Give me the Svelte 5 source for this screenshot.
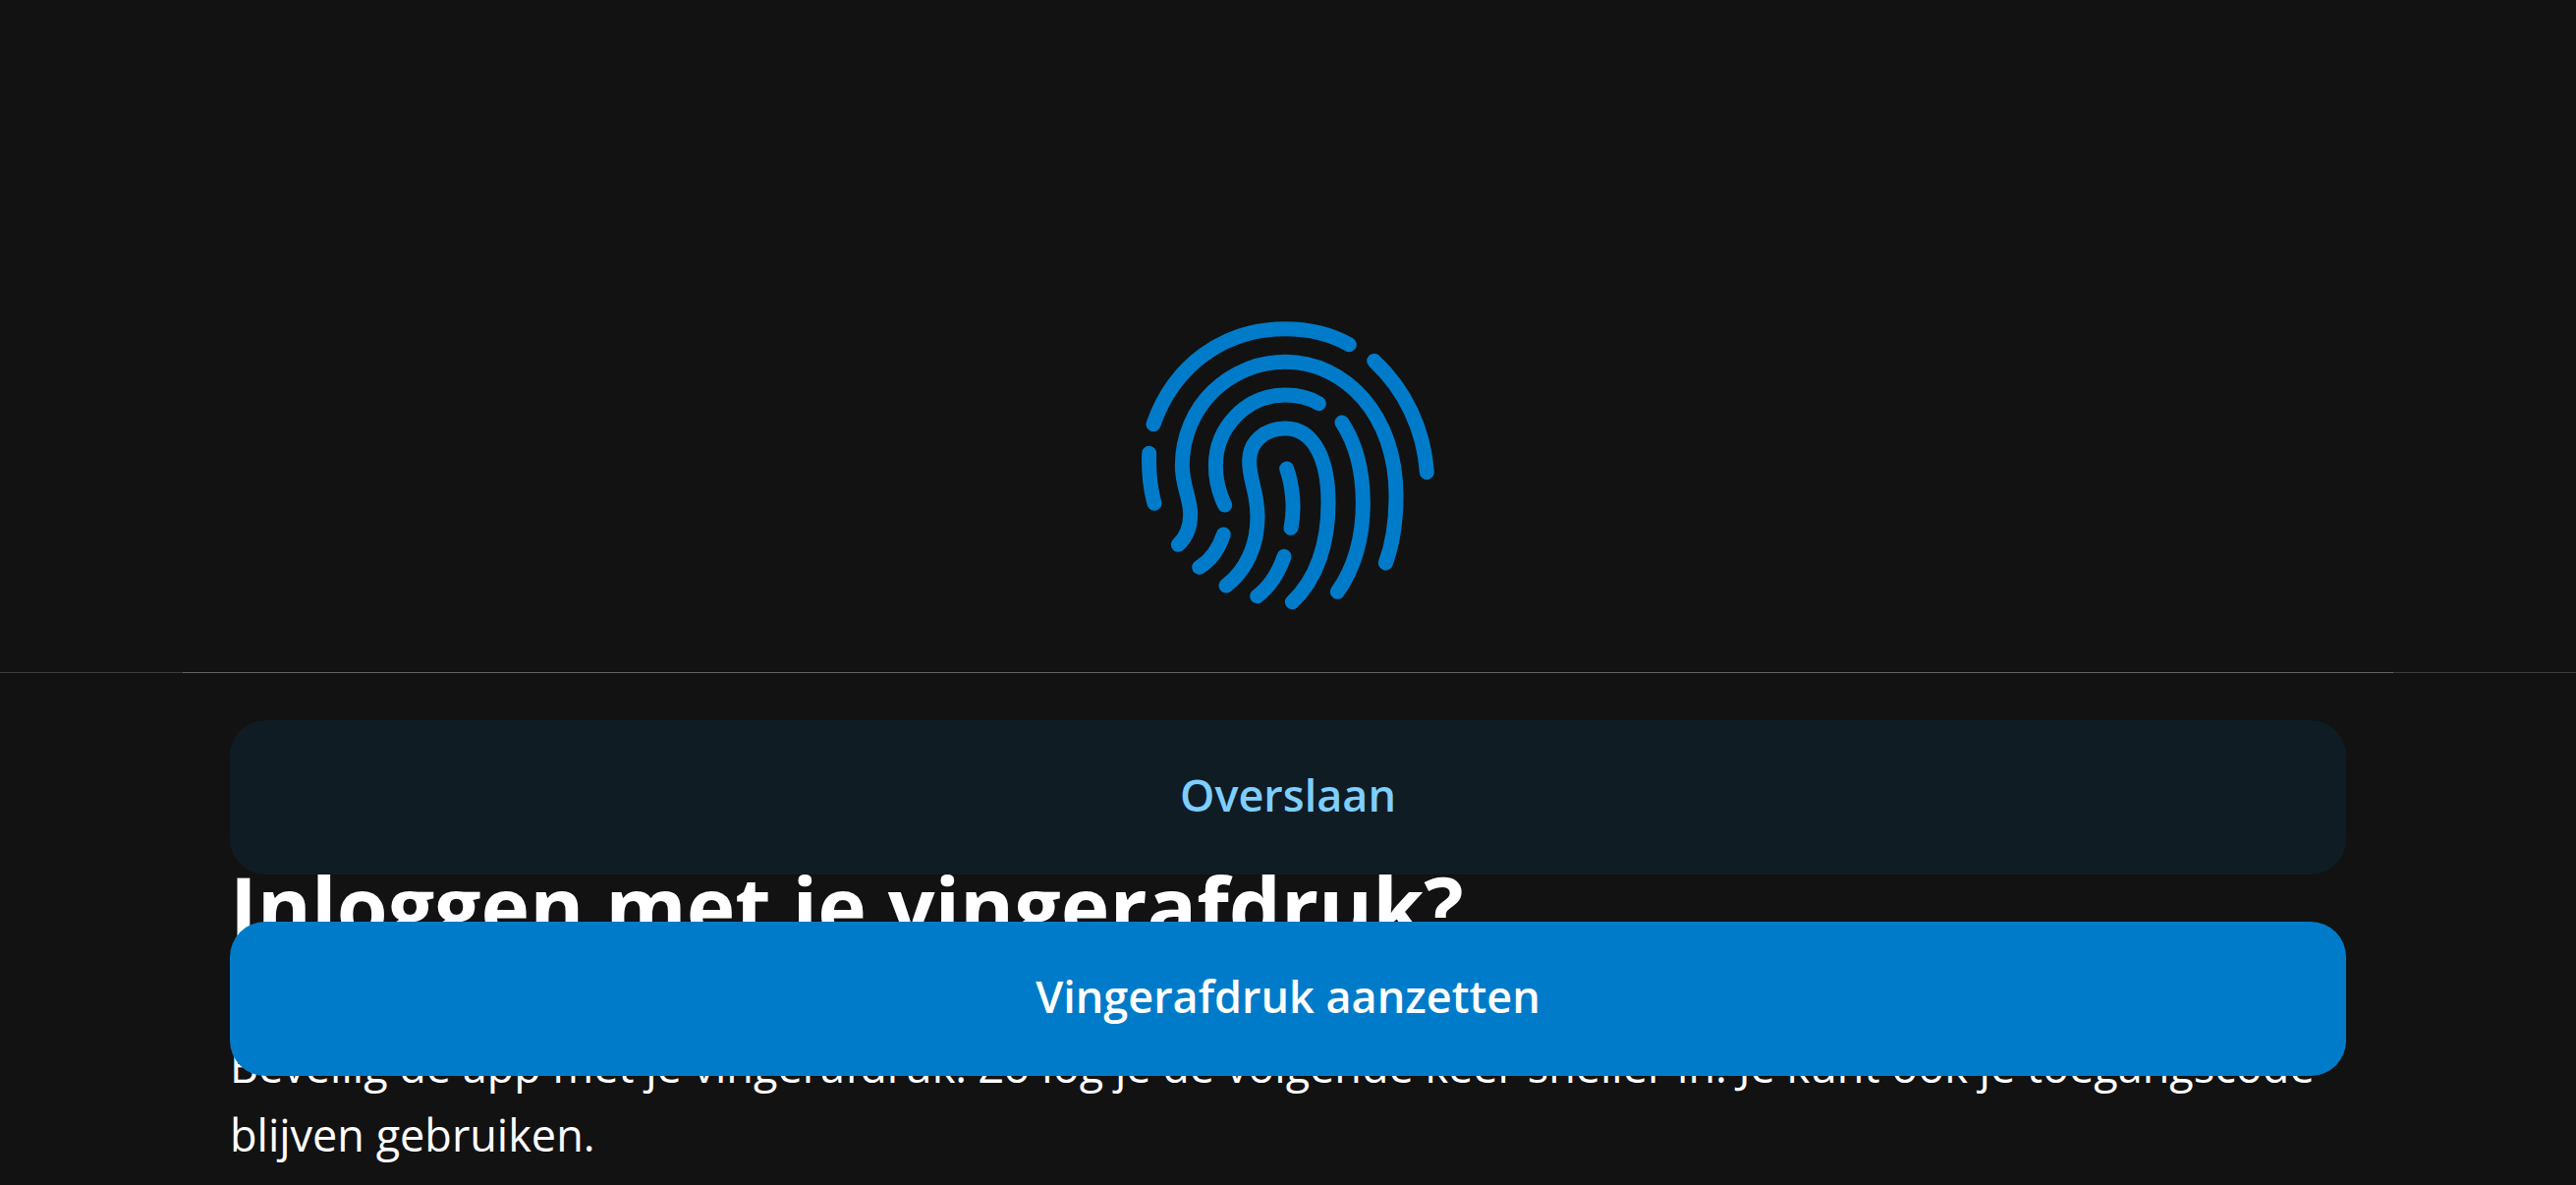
<script>
  const strokes = [
    'M102 365 C165 187 315 74 505 74 C580 74 640 88 700 122',
    'M776 172 C870 260 928 380 937 512',
    'M89 454 C87 510 92 560 105 607',
    'M178 733 C205 708 215 675 215 640 C215 590 190 555 190 492 C190 310 335 175 505 175 C690 175 843 340 843 582 C843 660 835 725 811 789',
    'M320 612 C302 575 292 535 292 492 C292 375 385 276 505 276 C545 276 578 284 607 302',
    'M678 360 C720 425 742 510 742 605 C742 710 715 805 664 877',
    'M324 858 C385 812 420 735 420 648 C420 570 395 540 395 478 C395 420 440 378 505 378 C590 378 636 470 636 605 C636 730 600 840 526 908',
    'M509 501 C526 550 535 620 522 682',
    'M316 702 C302 745 278 780 242 802',
    'M501 769 C484 818 459 860 419 890',
  ];
</script>

<div class="screen">
  <main class="content">
    <svg class="fingerprint" viewBox="3 0 1020 960" aria-hidden="true">
      {#each strokes as d}
        <path {d} />
      {/each}
    </svg>
    <h1>Inloggen met je vingerafdruk?</h1>
    <p>
      Beveilig de app met je vingerafdruk. Zo log je de volgende keer sneller in. Je kunt ook je toegangscode
      blijven gebruiken.
    </p>
  </main>

  <footer class="actions">
    <div class="safe-area">
      <button type="button" class="secondary">Overslaan</button>
      <button type="button" class="primary">Vingerafdruk aanzetten</button>
    </div>
  </footer>
</div>

<style>
  :global(body) {
    margin: 0;
    background: #121212;
  }

  .screen {
    position: relative;
    min-height: 100vh;
    box-sizing: border-box;
    overflow: hidden;
    background: #121212;
    color: #fff;
    font-family: 'Open Sans', 'Noto Sans', sans-serif;
  }

  .content {
    display: flex;
    flex-direction: column;
    padding: 310px 234px 0;
  }

  .fingerprint {
    align-self: center;
    width: 340px;
    height: 320px;
    fill: none;
    stroke: #007bc9;
    stroke-width: 45;
    stroke-linecap: round;
  }

  h1 {
    margin: 232px 0 0;
    font-size: 84px;
    line-height: 120px;
    font-weight: 700;
  }

  p {
    margin: 68px 0 0;
    font-size: 45px;
    line-height: 70px;
  }

  .actions {
    position: absolute;
    right: 0;
    bottom: 0;
    left: 0;
    border-top: 1px solid #3c3c3c;
  }

  .safe-area {
    display: flex;
    flex-direction: column;
    gap: 48px;
    margin: -1px 186px 0;
    padding: 48px 48px 111px;
    border-top: 1px solid #646464;
  }

  button {
    height: 157px;
    padding: 0 48px 6px;
    border: 0;
    border-radius: 36px;
    font: inherit;
    font-size: 45px;
    font-weight: 600;
    cursor: pointer;
  }

  .secondary {
    background: #0f1c24;
    color: #7dcfff;
  }

  .primary {
    background: #007bc9;
    color: #fff;
  }
</style>
